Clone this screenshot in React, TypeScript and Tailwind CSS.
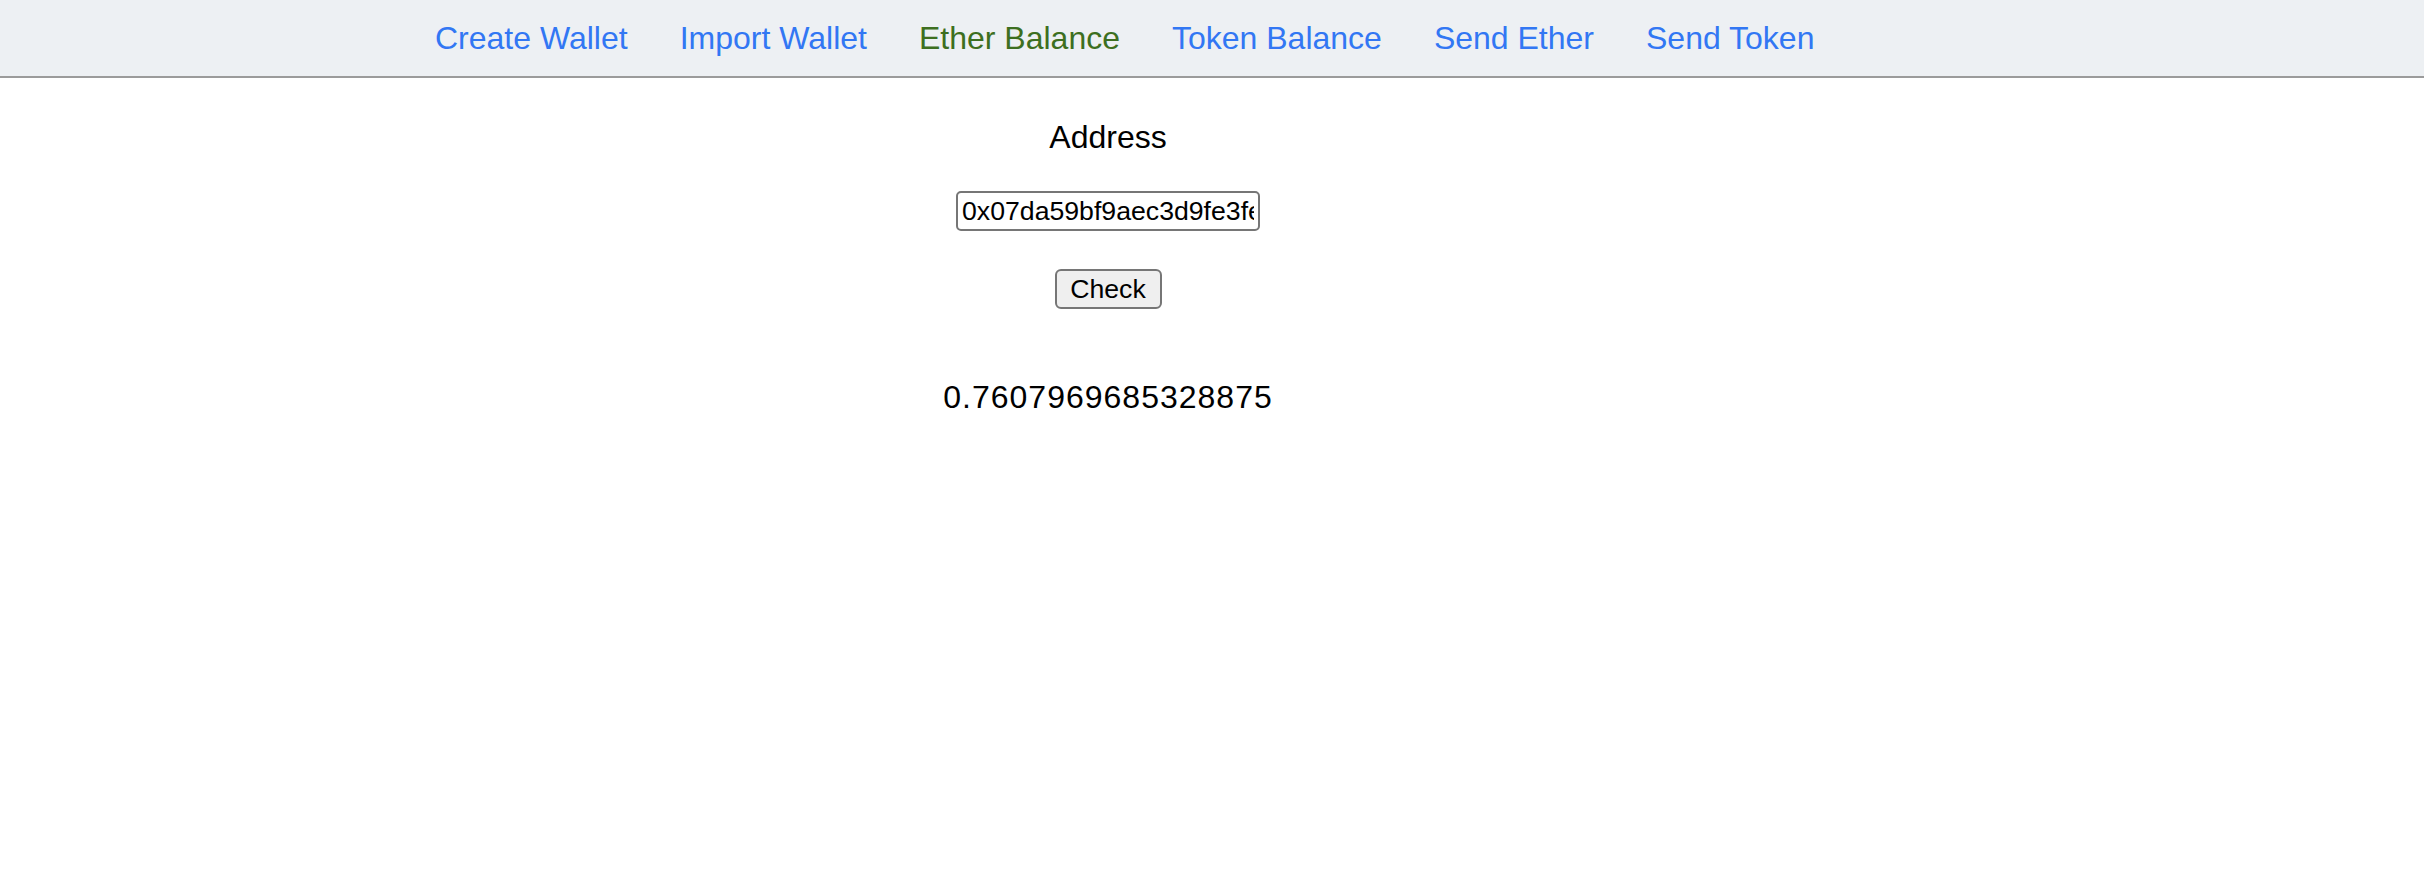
const navItems = [
  { label: "Create Wallet", active: false },
  { label: "Import Wallet", active: false },
  { label: "Ether Balance", active: true },
  { label: "Token Balance", active: false },
  { label: "Send Ether", active: false },
  { label: "Send Token", active: false },
];

export default function App() {
  return (
    <div className="min-h-screen bg-white font-['Liberation_Sans',Arial,sans-serif] text-black">
      <nav className="h-[78px] bg-[#edf0f3] border-b-2 border-[#9b9b9b]">
        <ul className="flex h-full items-center gap-[52px] pl-[435px]">
          {navItems.map((item) => (
            <li key={item.label}>
              <a
                href="#"
                className={
                  item.active
                    ? "text-[32px] leading-[37px] text-[#3d6f20]"
                    : "text-[32px] leading-[37px] text-[#3277f3]"
                }
              >
                {item.label}
              </a>
            </li>
          ))}
        </ul>
      </nav>

      <main className="w-[2216px] flex flex-col items-center pt-[41px]">
        <p className="text-[32px] leading-[37px]">Address</p>
        <input
          type="text"
          defaultValue="0x07da59bf9aec3d9fe3fe0c1b39a15e5b8d8f6a4c"
          className="mt-[35px] w-[304px] h-[40px] px-[4px] border-2 border-[#767676] rounded-[5px] text-[26.67px] font-['Liberation_Sans',Arial,sans-serif] text-black outline-none"
        />
        <button className="mt-[38px] w-[107px] h-[40px] bg-[#efefef] border-2 border-[#767676] rounded-[6px] text-[26.67px] leading-none text-black">
          Check
        </button>
        <p className="mt-[70px] text-[32px] leading-[37px] tracking-[1px]">
          0.7607969685328875
        </p>
      </main>
    </div>
  );
}
